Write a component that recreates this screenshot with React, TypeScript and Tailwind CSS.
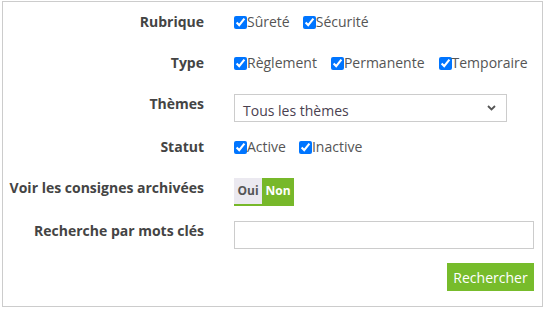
import React from "react";

function Check({ label }: { label: string }) {
  return (
    <label className="flex items-center">
      <input type="checkbox" defaultChecked className="m-0 h-[13px] w-[13px] accent-[#0075ff]" />
      <span>{label}</span>
    </label>
  );
}

function Row({ label, children, className = "" }: { label: string; children: React.ReactNode; className?: string }) {
  return (
    <div className={`flex items-start ${className}`}>
      <div className="w-[201px] shrink-0 text-right font-bold leading-[20px] text-[#444]">{label}</div>
      <div className="ml-[30px] flex-1">{children}</div>
    </div>
  );
}

export default function App() {
  return (
    <div className="pl-[2px] pt-[1px] font-['Open_Sans',sans-serif] text-[14px] text-[#555]">
      <div className="h-[306px] w-[541px] border border-[#ccc] bg-white pr-[8px] pt-[10px]">
        {/* RUBRIQUE */}
        <Row label="Rubrique" className="mb-[21px]">
          <div className="flex h-[20px] items-center gap-[13px] leading-[20px]">
            <Check label="Sûreté" />
            <Check label="Sécurité" />
          </div>
        </Row>

        {/* TYPE */}
        <Row label="Type" className="mb-[21px]">
          <div className="flex h-[20px] items-center gap-[14px] leading-[20px]">
            <Check label="Règlement" />
            <Check label="Permanente" />
            <Check label="Temporaire" />
          </div>
        </Row>

        {/* THEMES */}
        <Row label="Thèmes" className="mb-[15px]">
          <div className="relative h-[28px] w-[273px] border border-[#ccc] bg-white">
            <div className="pl-[8px] pt-[6px] leading-[20px] text-[#4a4150]">Tous les thèmes</div>
            <svg
              className="absolute right-[10px] top-[10px]"
              width="9"
              height="6"
              viewBox="0 0 9 6"
              fill="none"
            >
              <path d="M1 1l3.5 3.5L8 1" stroke="#555" strokeWidth="1.8" />
            </svg>
          </div>
        </Row>

        {/* STATUT */}
        <Row label="Statut" className="mb-[21px]">
          <div className="flex h-[20px] items-center gap-[13px] leading-[20px]">
            <Check label="Active" />
            <Check label="Inactive" />
          </div>
        </Row>

        {/* ARCHIVES */}
        <Row label="Voir les consignes archivées" className="mb-[15px]">
          <div className="flex h-[28px] w-[60px] border-b-2 border-[#77b82a] text-[12px] font-bold">
            <div className="flex w-[28px] items-center justify-center bg-[#ebe9f0] text-[#555]">Oui</div>
            <div className="flex flex-1 items-center justify-center bg-[#77b82a] text-white">Non</div>
          </div>
        </Row>

        {/* MOTS CLES */}
        <Row label="Recherche par mots clés" className="mb-[14px]">
          <div className="h-[28px] w-full border border-[#ccc] bg-white" />
        </Row>

        <div className="flex justify-end">
          <button className="h-[28px] w-[87px] bg-[#77bc2b] text-[14px] text-white">Rechercher</button>
        </div>
      </div>
    </div>
  );
}
